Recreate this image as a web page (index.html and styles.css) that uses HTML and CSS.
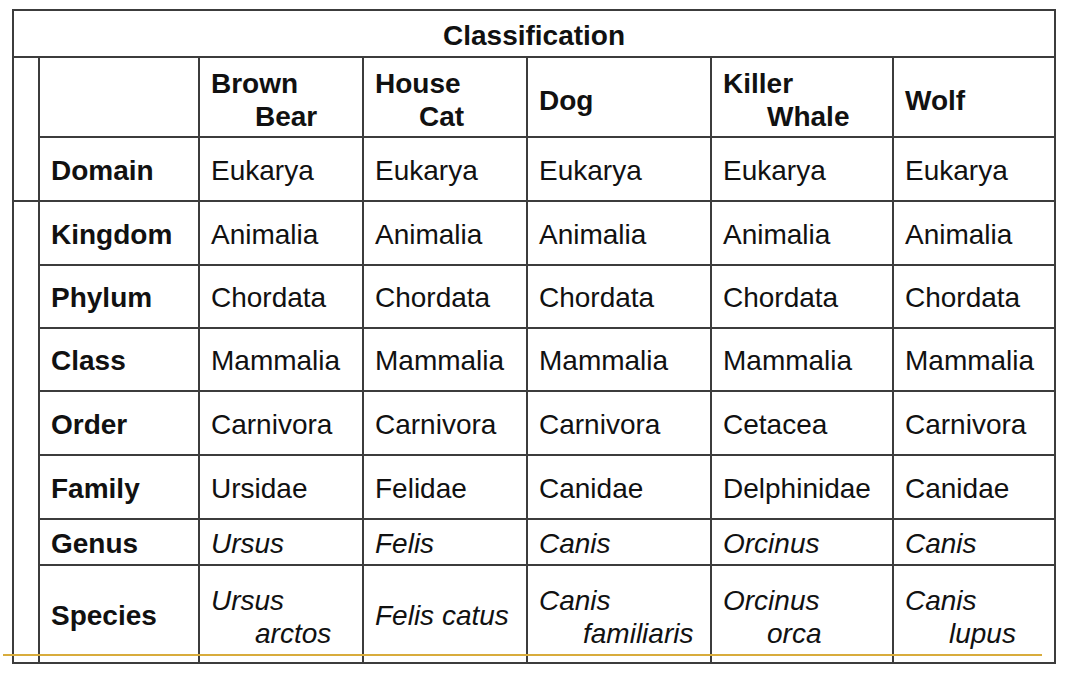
FILE: index.html
```html
<!DOCTYPE html>
<html>
<head>
<meta charset="utf-8">
<link rel="stylesheet" href="styles.css">
</head>
<body>
<div class="slide">
  <table class="cls">
    <colgroup>
      <col class="c-strip"><col class="c-label"><col class="c-a"><col class="c-b"><col class="c-c"><col class="c-d"><col class="c-e">
    </colgroup>
    <tr class="r-title"><th colspan="7" class="title">Classification</th></tr>
    <tr class="r-head">
      <td rowspan="2" class="strip"></td>
      <td></td>
      <th class="hang">Brown<br>Bear</th>
      <th class="hang">House<br>Cat</th>
      <th>Dog</th>
      <th class="hang">Killer<br>Whale</th>
      <th>Wolf</th>
    </tr>
    <tr class="r-std">
      <th>Domain</th><td>Eukarya</td><td>Eukarya</td><td>Eukarya</td><td>Eukarya</td><td>Eukarya</td>
    </tr>
    <tr class="r-std">
      <td rowspan="8" class="strip"></td>
      <th>Kingdom</th><td>Animalia</td><td>Animalia</td><td>Animalia</td><td>Animalia</td><td>Animalia</td>
    </tr>
    <tr class="r-std2">
      <th>Phylum</th><td>Chordata</td><td>Chordata</td><td>Chordata</td><td>Chordata</td><td>Chordata</td>
    </tr>
    <tr class="r-std2">
      <th>Class</th><td>Mammalia</td><td>Mammalia</td><td>Mammalia</td><td>Mammalia</td><td>Mammalia</td>
    </tr>
    <tr class="r-std">
      <th>Order</th><td>Carnivora</td><td>Carnivora</td><td>Carnivora</td><td>Cetacea</td><td>Carnivora</td>
    </tr>
    <tr class="r-std">
      <th>Family</th><td>Ursidae</td><td>Felidae</td><td>Canidae</td><td>Delphinidae</td><td>Canidae</td>
    </tr>
    <tr class="r-genus">
      <th>Genus</th><td class="it">Ursus</td><td class="it">Felis</td><td class="it">Canis</td><td class="it">Orcinus</td><td class="it">Canis</td>
    </tr>
    <tr class="r-species">
      <th>Species</th>
      <td class="it hang">Ursus<br>arctos</td>
      <td class="it">Felis catus</td>
      <td class="it hang">Canis<br>familiaris</td>
      <td class="it hang">Orcinus<br>orca</td>
      <td class="it hang">Canis<br>lupus</td>
    </tr>
  </table>
  <div class="rule"></div>
</div>
</body>
</html>
```
FILE: styles.css
```css
html, body {
  margin: 0;
  padding: 0;
  background: #ffffff;
}

.slide {
  position: relative;
  width: 1075px;
  height: 686px;
  padding: 9px 0 0 12px;
  box-sizing: border-box;
}

.cls {
  border-collapse: collapse;
  table-layout: fixed;
  width: 1042px;
  font-family: "Liberation Sans", Arial, sans-serif;
  font-size: 28px;
  color: #111;
}

.c-strip { width: 26px; }
.c-label { width: 160px; }
.c-a { width: 164px; }
.c-b { width: 164px; }
.c-c { width: 184px; }
.c-d { width: 182px; }
.c-e { width: 162px; }

.cls th,
.cls td {
  border: 2px solid #3c3c3c;
  padding: 2px 0 0 11px;
  text-align: left;
  vertical-align: middle;
  line-height: 33px;
  white-space: nowrap;
}

.cls th { font-weight: bold; }

.cls th.title {
  text-align: center;
  padding: 3px 0 0 0;
}

.cls td.strip { padding: 0; }

.r-title { height: 47px; }
.r-head { height: 80px; }
.r-head th { padding-top: 6px; }
.r-std { height: 64px; }
.r-std2 { height: 63px; }
.r-genus { height: 46px; }
.r-species { height: 98px; }
.r-species td.hang { padding-top: 6px; }

.it { font-style: italic; }

.hang {
  padding-left: 55px !important;
  text-indent: -44px;
}

.rule {
  position: absolute;
  left: 3px;
  top: 654px;
  width: 1039px;
  height: 2px;
  background: #d8ac3c;
}
```
